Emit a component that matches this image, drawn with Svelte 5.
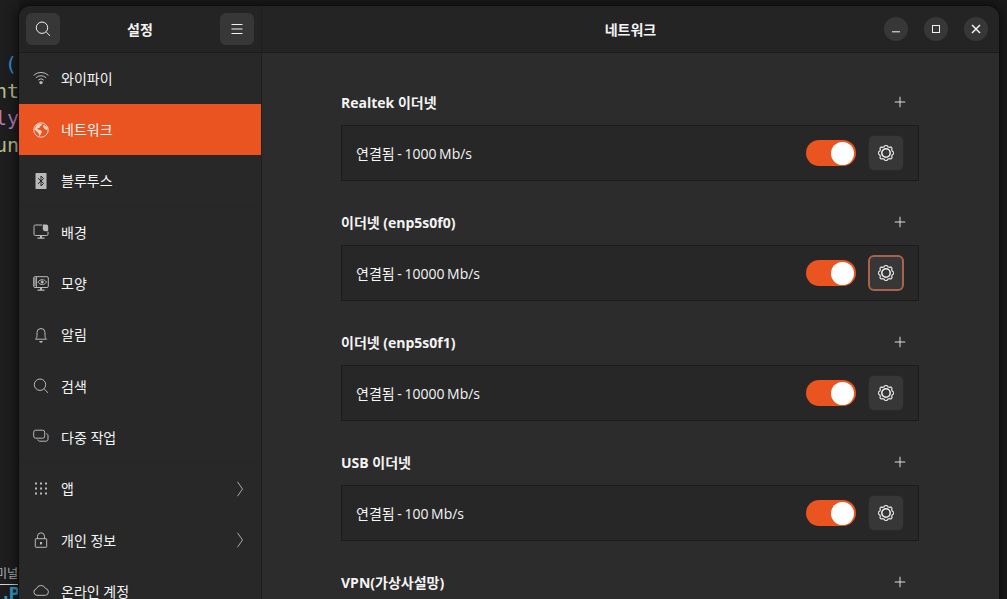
<script>
	const menu = [
		{ icon: 'wifi', label: '와이파이' },
		{ icon: 'globe', label: '네트워크', active: true },
		{ icon: 'bluetooth', label: '블루투스', sep: true },
		{ icon: 'wallpaper', label: '배경' },
		{ icon: 'look', label: '모양' },
		{ icon: 'bell', label: '알림' },
		{ icon: 'search', label: '검색' },
		{ icon: 'multi', label: '다중 작업', sep: true },
		{ icon: 'apps', label: '앱', more: true },
		{ icon: 'lock', label: '개인 정보', more: true },
		{ icon: 'cloud', label: '온라인 계정' }
	];

	const networks = [
		{ name: 'Realtek 이더넷', status: '연결됨 - 1000 Mb/s' },
		{ name: '이더넷 (enp5s0f0)', status: '연결됨 - 10000 Mb/s', focus: true },
		{ name: '이더넷 (enp5s0f1)', status: '연결됨 - 10000 Mb/s' },
		{ name: 'USB 이더넷', status: '연결됨 - 100 Mb/s' }
	];

	// eight soft teeth round the settings gear
	const gearPath = Array.from({ length: 32 }, (_, i) => {
		const r = [7.7, 7.7, 6.5, 6.5][i % 4];
		const a = ((i - 0.5) * Math.PI) / 16;
		return `${i ? 'L' : 'M'}${(8 + r * Math.cos(a)).toFixed(2)} ${(8 + r * Math.sin(a)).toFixed(2)}`;
	}).join('') + 'Z';
</script>

{#snippet icon(name)}
	<svg class="icon" viewBox="0 0 16 16" width="16" height="16" aria-hidden="true">
		{#if name === 'wifi'}
			<path class="ln" d="M.6 5.4a10.6 10.6 0 0 1 14.8 0M2.9 7.8a7.3 7.3 0 0 1 10.2 0M5.2 10.100a4 4 0 0 1 5.600 0" />
			<circle class="fl" cx="8" cy="12.600" r="1.700" />
		{:else if name === 'globe'}
			<circle class="ln" cx="8" cy="8" r="7.200" />
			<path class="fl" d="M3.200 3.600 6.600 1.400 9 2 8.400 3.800 6.800 4.400 6.600 6 4.600 6 4.800 7.600 7.400 8 9 9.600 7.800 12.400 6.400 14 5.400 11 3.600 9.400 1.600 7.400ZM10.600 2.400 14 5 14.600 8.600 12.800 7.400 11.200 6.600 10 4.800Z" />
		{:else if name === 'bluetooth'}
			<rect class="fl" x="2.500" y="-.5" width="11" height="17" rx="1.600" />
			<path class="cut" d="M5 5.200 10.600 10.400 8 13V3l2.600 2.600L5 10.800" />
		{:else if name === 'wallpaper'}
			<path class="ln" d="M15 8v2.200a1.300 1.300 0 0 1-1.300 1.300H2.300A1.300 1.300 0 0 1 1 10.200V2.300A1.300 1.300 0 0 1 2.300 1H9" />
			<path class="fl" d="M9.800.5h3.400a2 2 0 0 1 2 2v4.700h-2.800a2.600 2.600 0 0 1-2.600-2.600ZM7 11.500h2v2H7ZM4.500 13.500h7v1.200h-7Z" />
		{:else if name === 'look'}
			<rect class="ln" x=".7" y=".7" width="14.600" height="10.800" rx="1.300" />
			<path class="ln" d="M3.400 1v10.200" />
			<path class="ln" d="M4.800 6.100c2.600-3.200 6.200-3.200 8.800 0-2.600 3.200-6.200 3.200-8.800 0Z" />
			<circle class="fl" cx="9.200" cy="6.100" r="1.500" />
			<path class="fl" d="M7 11.500h2v2H7ZM4.500 13.500h7v1.200h-7ZM1 2.600h2v.8H1ZM1 4.600h2v.8H1ZM1 6.600h2v.8H1ZM1 8.600h2v.8H1Z" />
		{:else if name === 'bell'}
			<path class="ln" d="M2.500 12.200c.9-.9 1.500-1.800 1.500-3.400V5.500a4 4 0 0 1 8 0v3.300c0 1.600.6 2.500 1.500 3.400Z" />
			<path class="fl" d="M6.200 13.900h3.600a1.800 1.800 0 0 1-3.600 0Z" />
		{:else if name === 'search'}
			<circle class="ln" cx="7" cy="6.700" r="5.700" />
			<path class="ln" d="m11.200 11 3.800 3.800" />
		{:else if name === 'multi'}
			<rect class="ln" x=".7" y="1.200" width="11" height="8" rx="2" />
			<path class="ln" d="M13.300 4.700c1 .2 1.700.8 1.700 1.800v3.700c0 1.200-.8 2-2 2H6.700c-1 0-1.700-.6-2-1.700" />
		{:else if name === 'apps'}
			{#each [2.5, 7.5, 12.5] as y}
				{#each [3, 8, 13] as x}
					<rect class="fl" x={x - 1} y={y - 1} width="2" height="2" />
				{/each}
			{/each}
		{:else if name === 'lock'}
			<rect class="ln" x="2.300" y="6.700" width="11.400" height="8.600" rx=".6" />
			<path class="ln" d="M4.500 6.700V4.300a3.500 3.500 0 0 1 7 0v2.400" />
			<rect class="fl" x="7" y="10" width="2" height="2.400" />
		{:else if name === 'cloud'}
			<path class="ln" d="M4 12.300a3.300 3.300 0 0 1-.6-6.500 4.800 4.800 0 0 1 9-.4 3.500 3.500 0 0 1 .2 6.900Z" />
		{/if}
	</svg>
{/snippet}

{#snippet gear()}
	<svg class="gear" viewBox="0 0 16 16" width="16" height="16" aria-hidden="true">
		<path d={gearPath} fill="none" stroke="#dcdcdc" stroke-width="1.300" stroke-linejoin="round" />
		<circle cx="8" cy="8" r="4.200" fill="none" stroke="#f0f0f0" stroke-width="1.500" />
	</svg>
{/snippet}

<div class="desktop">
	<div class="terminal" aria-hidden="true">
		<div class="code">
			<span class="blue">(</span>
			<span class="khaki">nt</span>
			<span class="purple">ly</span>
			<span class="khaki">un</span>
		</div>
		<div class="tab">미널</div>
		<div class="prompt">.P</div>
	</div>

	<div class="window">
		<aside class="sidebar">
			<header class="side-head">
				<button class="head-btn" aria-label="검색">
					<svg viewBox="0 0 16 16" width="16" height="16"><circle class="ln bright" cx="7" cy="6.700" r="5.700" /><path class="ln bright" d="m11.200 11 3.800 3.800" /></svg>
				</button>
				<h2>설정</h2>
				<button class="head-btn" aria-label="메뉴">
					<svg viewBox="0 0 16 16" width="16" height="16"><path class="ln bright" d="M2.500 3.500h11M2.500 8h11M2.500 12.500h11" /></svg>
				</button>
			</header>
			<nav>
				{#each menu as item}
					<div class="item" class:active={item.active} class:sep={item.sep}>
						{@render icon(item.icon)}
						<span class="label">{item.label}</span>
						{#if item.more}
							<svg class="chevron" viewBox="0 0 8 16" width="8" height="16"><path d="m1.500.8 5 7.200-5 7.200" /></svg>
						{/if}
					</div>
				{/each}
			</nav>
		</aside>

		<main class="content">
			<header class="main-head">
				<span></span>
				<h1>네트워크</h1>
				<div class="controls">
					<button class="round" aria-label="최소화"><svg viewBox="0 0 16 16" width="16" height="16"><path class="ln bright" d="M4 10.800h8" /></svg></button>
					<button class="round" aria-label="최대화"><svg viewBox="0 0 16 16" width="16" height="16"><rect class="ln bright" x="4.500" y="4.500" width="7" height="7" /></svg></button>
					<button class="round" aria-label="닫기"><svg viewBox="0 0 16 16" width="16" height="16"><path class="ln bright thick" d="m4 4 8 8M12 4l-8 8" /></svg></button>
				</div>
			</header>
			<div class="panel">
				{#each networks as net}
					<section>
						<div class="sec-head">
							<h3>{net.name}</h3>
							<button class="plus" aria-label="추가"><svg viewBox="0 0 16 16" width="16" height="16"><path class="ln bright" d="M8 2v12M2 8h12" /></svg></button>
						</div>
						<div class="card">
							<span class="status">{net.status}</span>
							<span class="toggle"><span class="knob"></span></span>
							<button class="gear-btn" class:focus={net.focus} aria-label="설정">{@render gear()}</button>
						</div>
					</section>
				{/each}
				<section>
					<div class="sec-head">
						<h3>VPN(가상사설망)</h3>
						<button class="plus" aria-label="추가"><svg viewBox="0 0 16 16" width="16" height="16"><path class="ln bright" d="M8 2v12M2 8h12" /></svg></button>
					</div>
				</section>
			</div>
		</main>
	</div>
</div>

<style>
	:global(body) {
		background: #1b1b1b;
		overflow: hidden;
	}

	.desktop {
		position: relative;
		width: 1007px;
		height: 599px;
		overflow: hidden;
		padding: 6px 8px 0 19px;
		box-sizing: border-box;
		font-family: "Open Sans", "Noto Sans CJK KR", sans-serif;
		color: #f4f4f4;
	}

	.terminal {
		position: absolute;
		inset: 0 auto 0 0;
		width: 19px;
		background: #1e1e1e;
		overflow: hidden;
		font-family: "DejaVu Sans Mono", monospace;
	}

	.code {
		display: flex;
		flex-direction: column;
		margin: 51px 0 0 -5px;
		font-size: 20px;
		line-height: 27px;
		white-space: nowrap;
	}

	.blue {
		margin-left: 10px;
		color: #2f8fd6;
	}
	.khaki { color: #b8bd8f; }
	.purple { color: #b27cb4; }

	.tab {
		position: absolute;
		top: 566px;
		left: -4px;
		width: 30px;
		padding-bottom: 4px;
		border-bottom: 1px solid #d6d6d6;
		font: 12px/14px "Noto Sans CJK KR", sans-serif;
		color: #b5b5b5;
	}

	.prompt {
		position: absolute;
		top: 585px;
		left: 3px;
		font: bold 15px/18px "DejaVu Sans", sans-serif;
		color: #2e9cc4;
	}

	.window {
		position: relative;
		display: flex;
		height: 620px;
		border-radius: 12px 12px 0 0;
		overflow: hidden;
		background: #2c2c2c;
		box-shadow: 0 0 0 1px #0e0e0e, 0 0 12px 3px rgba(0, 0, 0, 0.55);
	}

	.sidebar {
		flex: none;
		width: 242px;
		background: #282828;
		border-right: 1px solid #1f1f1f;
	}

	.side-head,
	.main-head {
		height: 46px;
		background: #242424;
		border-bottom: 1px solid #1b1b1b;
		box-sizing: content-box;
	}

	.side-head {
		display: flex;
		align-items: center;
		justify-content: space-between;
		padding: 0 7px;
	}

	h1, h2, h3 {
		margin: 0;
		font-size: 14px;
		font-weight: 700;
	}

	button {
		display: flex;
		align-items: center;
		justify-content: center;
		padding: 0;
		border: 0;
		background: none;
	}

	.head-btn {
		width: 34px;
		height: 32px;
		border-radius: 6px;
		background: #373737;
	}

	.ln {
		fill: none;
		stroke: #b9b9b9;
		stroke-width: 1;
	}

	.ln.bright {
		stroke: #f2f2f2;
	}

	.ln.thick {
		stroke-width: 1.5;
	}

	.fl {
		fill: #b9b9b9;
	}

	.cut {
		fill: none;
		stroke: #262626;
		stroke-width: 1;
	}

	nav {
		margin-top: -0.3px;
	}

	.item {
		display: flex;
		align-items: center;
		gap: 12px;
		height: 51.3px;
		padding: 0 17px 0 14px;
		box-sizing: border-box;
		font-size: 14px;
	}

	.item.sep {
		box-shadow: inset 0 -1px 0 #252525;
	}

	.item.active {
		background: #ea5420;
	}

	.item.active .ln { stroke: #fbd3c3; }
	.item.active .fl { fill: #fbd3c3; }

	.label {
		flex: 1;
		padding-bottom: 1px;
	}

	.chevron path {
		fill: none;
		stroke: #a8a8a8;
		stroke-width: 1;
	}

	.content {
		flex: 1;
		min-width: 0;
	}

	.main-head {
		display: grid;
		grid-template-columns: 1fr auto 1fr;
		align-items: center;
		text-align: center;
	}

	.controls {
		display: flex;
		justify-content: flex-end;
		gap: 16px;
		padding-right: 11px;
	}

	.round {
		width: 24px;
		height: 24px;
		border-radius: 50%;
		background: #373737;
	}

	.panel {
		width: 578px;
		margin-left: 79px;
		padding-top: 31px;
	}

	section {
		margin-bottom: 23px;
	}

	.sec-head {
		display: flex;
		align-items: center;
		justify-content: space-between;
		height: 36px;
		margin-bottom: 5px;
		padding-right: 1px;
	}

	.plus {
		width: 36px;
		height: 36px;
	}

	.plus svg {
		width: 14px;
		height: 14px;
	}

	.card {
		display: flex;
		align-items: center;
		gap: 12px;
		height: 56px;
		box-sizing: border-box;
		padding: 0 14px;
		background: #272727;
		border: 1px solid #1b1b1b;
		font-size: 14px;
	}

	.status {
		flex: 1;
		word-spacing: -1px;
	}

	.toggle {
		display: flex;
		justify-content: flex-end;
		align-items: center;
		width: 50px;
		height: 26px;
		padding: 0 2px;
		box-sizing: border-box;
		border-radius: 13px;
		background: #ea5420;
	}

	.knob {
		width: 23px;
		height: 23px;
		border-radius: 50%;
		background: #fff;
	}

	.gear-btn {
		width: 36px;
		height: 36px;
		box-sizing: border-box;
		border: 1px solid #2a2a2a;
		border-radius: 6px;
		background: #373737;
	}

	.gear-btn.focus {
		border: 2px solid #a9634c;
	}
</style>
